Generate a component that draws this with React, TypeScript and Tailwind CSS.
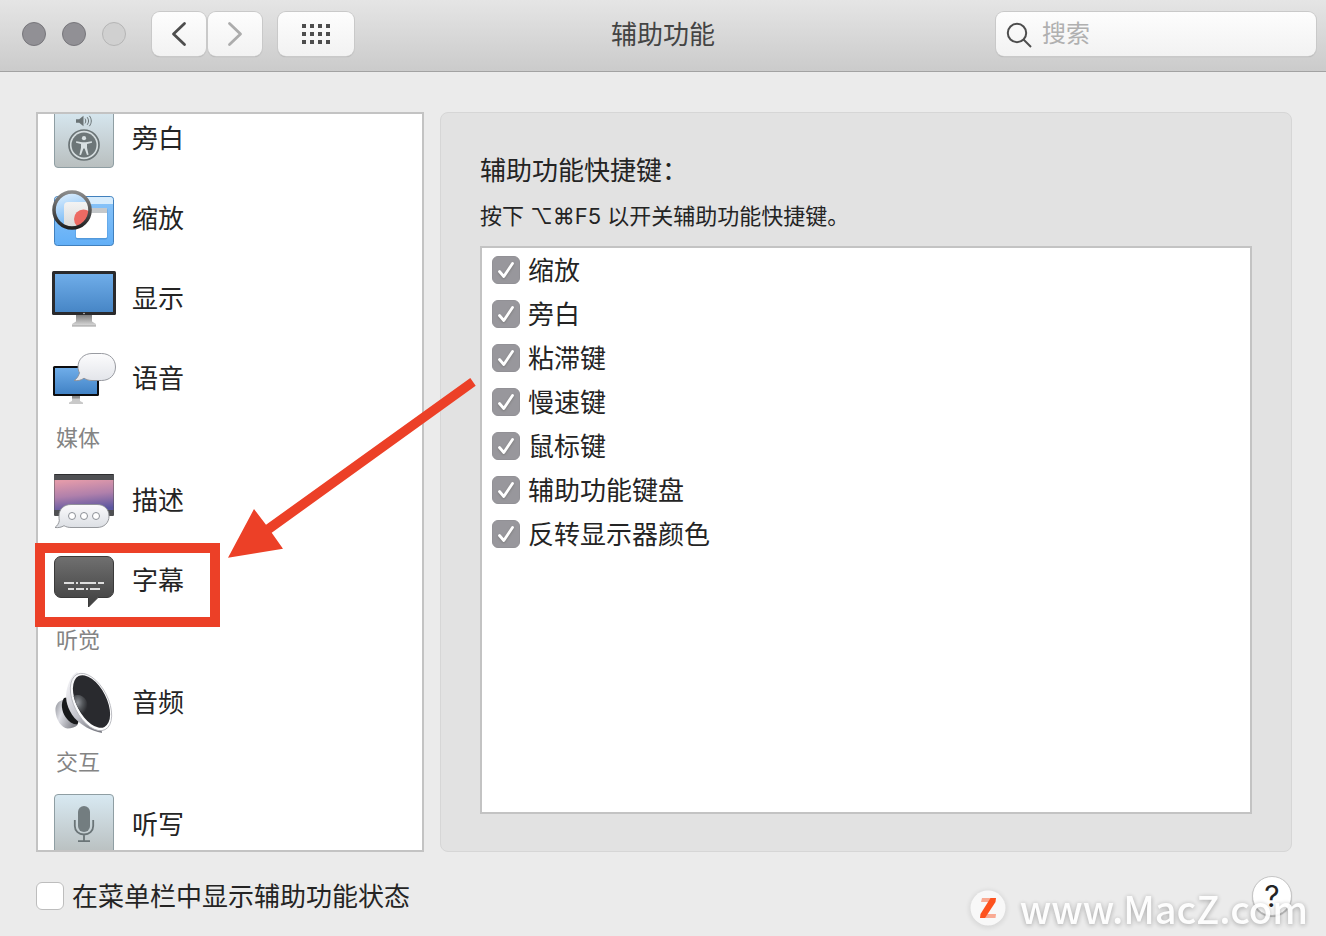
import { type ReactNode, useLayoutEffect, useRef, useState } from "react";

type Entry =
  | { kind: "heading"; label: string }
  | { kind: "item"; label: string; icon: ReactNode };

const SHORTCUTS = ["缩放", "旁白", "粘滞键", "慢速键", "鼠标键", "辅助功能键盘", "反转显示器颜色"];

function IconBox({ children }: { children: ReactNode }) {
  return (
    <svg viewBox="0 0 64 64" className="size-16 shrink-0" fill="none" aria-hidden="true">
      {children}
    </svg>
  );
}

function Tile({ id }: { id: string }) {
  return (
    <>
      <linearGradient id={id} x1="0" y1="0" x2="0" y2="1">
        <stop offset="0" stopColor="#d8e9f2" />
        <stop offset="1" stopColor="#b9bfbf" />
      </linearGradient>
      <rect x="2.5" y="2.5" width="59" height="59" rx="3.5" fill={`url(#${id})`} stroke="#8f9ea3" />
    </>
  );
}

function VoiceOverIcon() {
  return (
    <IconBox>
      <Tile id="voiceover-tile" />
      <path d="M24 13.2h3.2l4.3-3.4v10.4l-4.3-3.4H24z" fill="#6a7375" />
      <path d="M33 12.6c1 1.6 1 3.2 0 4.8M35.2 11.2c1.8 2.5 1.8 5.1 0 7.6M37.4 9.8c2.5 3.5 2.5 6.9 0 10.4" stroke="#6a7375" strokeWidth="1" />
      <circle cx="32" cy="39" r="15" stroke="#6a7375" strokeWidth="1.7" fill="#d5dddf" />
      <circle cx="32" cy="39" r="12.5" fill="#6d7678" />
      <circle cx="32" cy="32.2" r="2.1" fill="#d8e0e2" />
      <path d="M24.2 35.2l6 1h3.6l6-1 .2 1.5-5 1.3v3.7l1.6 7-1.6.4-2.4-6.6h-1.2L29 49.1l-1.6-.4 1.6-7V38l-5-1.3z" fill="#d8e0e2" />
    </IconBox>
  );
}

function ZoomIcon() {
  return (
    <IconBox>
      <defs>
        <linearGradient id="zoom-desk" x1="0" y1="0" x2="0" y2="1">
          <stop offset="0" stopColor="#8cc5f8" />
          <stop offset="1" stopColor="#62aff7" />
        </linearGradient>
        <linearGradient id="zoom-lens" x1="0" y1="0" x2="0.3" y2="1">
          <stop offset="0" stopColor="#e8f4fe" />
          <stop offset="1" stopColor="#6db4f6" />
        </linearGradient>
        <linearGradient id="zoom-rim" x1="0" y1="0" x2="0" y2="1">
          <stop offset="0" stopColor="#8b8b8b" />
          <stop offset="1" stopColor="#202020" />
        </linearGradient>
        <linearGradient id="zoom-page" x1="0" y1="0" x2="0" y2="1">
          <stop offset="0" stopColor="#f3f3f3" />
          <stop offset="1" stopColor="#d5d5d5" />
        </linearGradient>
        <clipPath id="zoom-clip">
          <circle cx="20" cy="24" r="17" />
        </clipPath>
      </defs>
      <rect x="2.5" y="10.5" width="59" height="49" rx="3" fill="url(#zoom-desk)" stroke="#4180bd" />
      <path d="M3 18v-4a3 3 0 0 1 3-3h52a3 3 0 0 1 3 3v4z" fill="#d7ecfc" />
      <rect x="23.5" y="22" width="32" height="31.5" rx="2" fill="#3c7fc0" opacity=".5" />
      <rect x="24" y="22" width="31" height="30" rx="1.5" fill="#fff" />
      <path d="M24 22h30a1 1 0 0 1 1 1v4H24z" fill="#c4c8cb" />
      <circle cx="20" cy="24" r="18" fill="url(#zoom-lens)" />
      <g clipPath="url(#zoom-clip)">
        <rect x="12" y="16" width="30" height="30" rx="4" fill="url(#zoom-page)" />
        <circle cx="31.5" cy="33" r="9.5" fill="#ed6a63" />
      </g>
      <circle cx="20" cy="24" r="18" stroke="url(#zoom-rim)" strokeWidth="3.6" />
    </IconBox>
  );
}

function DisplayIcon() {
  return (
    <IconBox>
      <defs>
        <linearGradient id="display-screen" x1="0" y1="0" x2="0" y2="1">
          <stop offset="0" stopColor="#6fade9" />
          <stop offset="1" stopColor="#4786c6" />
        </linearGradient>
        <linearGradient id="display-stand" x1="0" y1="0" x2="0" y2="1">
          <stop offset="0" stopColor="#7f7f7f" />
          <stop offset="1" stopColor="#dcdcdc" />
        </linearGradient>
      </defs>
      <path d="M24 49h16v6.5l4 2.5v2H20v-2l4-2.5z" fill="url(#display-stand)" />
      <path d="M20 60h24" stroke="#9b9b9b" />
      <rect y="5" width="64" height="44" rx="1.5" fill="#2a2a2c" />
      <rect x="3" y="8" width="58" height="38" fill="url(#display-screen)" />
      <circle cx="32" cy="47.5" r=".8" fill="#ccc" />
    </IconBox>
  );
}

function SpeechIcon() {
  return (
    <IconBox>
      <defs>
        <linearGradient id="speech-screen" x1="0" y1="0" x2="0" y2="1">
          <stop offset="0" stopColor="#6fade9" />
          <stop offset="1" stopColor="#4182c5" />
        </linearGradient>
        <linearGradient id="speech-bubble" x1="0" y1="0" x2="0" y2="1">
          <stop offset="0" stopColor="#fcfcfd" />
          <stop offset="1" stopColor="#e3e5ea" />
        </linearGradient>
      </defs>
      <path d="M20 50h8v5l3 1.5V58H17v-1.5l3-1.5z" fill="#c9c9c9" />
      <path d="M20 50h8v2.5h-8z" fill="#8d8d8d" />
      <rect x="1" y="20" width="46" height="30" rx="1.5" fill="#0c0c0e" />
      <rect x="3" y="22" width="42" height="26" fill="url(#speech-screen)" />
      <path
        d="M40 7.500h9.500c8 0 14 5.500 14 13.500s-6 13.500-14 13.500H40c-3 0-5.500-.8-8-2.300-3 2.100-6 2.800-10 2.300 3-1.800 4.600-4.500 5.500-7.700-1-1.800-1.500-3.800-1.500-5.800 0-8 6-13.500 14-13.500z"
        fill="url(#speech-bubble)"
        stroke="#8d9096"
        strokeWidth=".9"
      />
    </IconBox>
  );
}

function DescriptionsIcon() {
  return (
    <IconBox>
      <defs>
        <linearGradient id="desc-sky" x1="0.35" y1="0" x2="0.55" y2="1">
          <stop offset="0" stopColor="#e29aaa" />
          <stop offset=".5" stopColor="#b080ab" />
          <stop offset="1" stopColor="#5b56a0" />
        </linearGradient>
        <linearGradient id="desc-bubble" x1="0" y1="0" x2="0" y2="1">
          <stop offset="0" stopColor="#fbfbfc" />
          <stop offset="1" stopColor="#dcdfe4" />
        </linearGradient>
      </defs>
      <rect x="2" y="6" width="60" height="42" rx="1" fill="#4f5053" />
      <path d="M2.5 6.5h59" stroke="#2e2e30" />
      <rect x="2.5" y="12" width="59" height="30" fill="url(#desc-sky)" />
      <path
        d="M19 36.5h26c7 0 12 4.500 12 11.500s-5 11.500-12 11.500H19c-2.500 0-5-.6-7-1.800-2.500 1.600-5.500 2.200-9 1.800 2.300-1.800 3.800-4 4.300-6.800-.3-1.500-.3-3-.3-4.700 0-7 5-11.500 12-11.500z"
        fill="url(#desc-bubble)"
        stroke="#8b8d92"
        strokeWidth=".9"
      />
      <g fill="#fff" stroke="#8c9096" strokeWidth="1">
        <circle cx="20" cy="48" r="3.5" />
        <circle cx="32" cy="48" r="3.5" />
        <circle cx="44" cy="48" r="3.5" />
      </g>
    </IconBox>
  );
}

function CaptionsIcon() {
  return (
    <IconBox>
      <linearGradient id="captions-bubble" x1="0" y1="0" x2="0" y2="1">
        <stop offset="0" stopColor="#707070" />
        <stop offset="1" stopColor="#3f3f3f" />
      </linearGradient>
      <path
        d="M9 8.5h46a6.500 6.500 0 0 1 6.500 6.500v28a6.500 6.500 0 0 1-6.500 6.500h-9L36.500 59v-9.500H9A6.500 6.500 0 0 1 2.500 43V15A6.500 6.500 0 0 1 9 8.500z"
        fill="url(#captions-bubble)"
        stroke="#3a3a3a"
      />
      <path d="M12 35h10M24 35h2M28 35h16M46 35h6M16 41h6M24 41h8M34 41h2M38 41h10" stroke="#dedede" strokeWidth="2" />
    </IconBox>
  );
}

function AudioIcon() {
  return (
    <IconBox>
      <defs>
        <linearGradient id="audio-cap" x1="0" y1="0" x2="1" y2="0.5">
          <stop offset="0" stopColor="#8e9097" />
          <stop offset=".4" stopColor="#dfe0e6" />
          <stop offset="1" stopColor="#85868d" />
        </linearGradient>
        <linearGradient id="audio-horn" x1="0" y1="0.3" x2="0.7" y2="1">
          <stop offset="0" stopColor="#ececf0" />
          <stop offset=".55" stopColor="#bfc0c8" />
          <stop offset="1" stopColor="#7b7c84" />
        </linearGradient>
        <linearGradient id="audio-rim" x1="0" y1="0" x2="0.4" y2="1">
          <stop offset="0" stopColor="#f6f6f8" />
          <stop offset="1" stopColor="#ffffff" />
        </linearGradient>
        <radialGradient id="audio-dome" cx="0.3" cy="0.4" r="0.7">
          <stop offset="0" stopColor="#8e9196" />
          <stop offset=".5" stopColor="#55585c" />
          <stop offset="1" stopColor="#2b2c30" />
        </radialGradient>
      </defs>
      <path d="M11 30C6 31 3 35 3.500 41c.5 9 6 17 12 17.500 4 0 8-1.500 10-3.500z" fill="url(#audio-cap)" />
      <path d="M12 28c-3.500 5-2.500 13 1.500 19 3 4.500 7 7.500 12 7.500l2-6-8-22z" fill="#17181a" />
      <path d="M25 2c-6 3-9 12-10.500 19-1.500 9 1 18 8 27C29 55 39 61 50 63l-4-30z" fill="url(#audio-horn)" />
      <ellipse cx="39" cy="32" rx="17" ry="31" transform="rotate(-27 39 32)" fill="url(#audio-rim)" stroke="#b4b5bb" strokeWidth=".8" />
      <ellipse cx="39.500" cy="31.500" rx="15" ry="28.500" transform="rotate(-27 39.500 31.500)" fill="#292a2e" />
      <path d="M21.500 26c5-2.500 10 0 12.500 4 3 5 2 11-3 14-5-5-8-11-9.500-18z" fill="url(#audio-dome)" />
    </IconBox>
  );
}

function DictationIcon() {
  return (
    <IconBox>
      <Tile id="dictation-tile" />
      <rect x="26" y="14" width="12" height="26" rx="6" fill="#737d80" />
      <path d="M22.8 28v6c0 5 4 8.500 9.200 8.500s9.200-3.500 9.200-8.500v-6M32 43v6M26 49.200h12" stroke="#6a7477" strokeWidth="1.8" />
    </IconBox>
  );
}

const ENTRIES: Entry[] = [
  { kind: "item", label: "旁白", icon: <VoiceOverIcon /> },
  { kind: "item", label: "缩放", icon: <ZoomIcon /> },
  { kind: "item", label: "显示", icon: <DisplayIcon /> },
  { kind: "item", label: "语音", icon: <SpeechIcon /> },
  { kind: "heading", label: "媒体" },
  { kind: "item", label: "描述", icon: <DescriptionsIcon /> },
  { kind: "item", label: "字幕", icon: <CaptionsIcon /> },
  { kind: "heading", label: "听觉" },
  { kind: "item", label: "音频", icon: <AudioIcon /> },
  { kind: "heading", label: "交互" },
  { kind: "item", label: "听写", icon: <DictationIcon /> },
];

function Toolbar() {
  const button =
    "flex h-11 items-center justify-center rounded-lg bg-linear-to-b from-[#fdfdfd] to-[#f2f2f2] shadow-[0_0_0_1px_#c9c9c9,0_1px_1px_#a0a0a0]";
  return (
    <header className="grid h-[72px] shrink-0 grid-cols-[1fr_auto_1fr] items-center border-b border-[#a2a2a2] bg-linear-to-b from-[#e5e5e5] to-[#cbcbcb] px-[10px] pb-[3px]">
      <div className="flex items-center pl-3">
        <div className="flex gap-4">
          <button type="button" aria-label="关闭" className="size-6 rounded-full border border-[#77767b] bg-[#919095]" />
          <button type="button" aria-label="最小化" className="size-6 rounded-full border border-[#77767b] bg-[#919095]" />
          <button type="button" aria-label="缩放窗口" disabled className="size-6 rounded-full border border-[#b5b5b5] bg-[#d0d0d0]" />
        </div>
        <div className="ml-[26px] flex gap-[2px]">
          <button type="button" aria-label="后退" className={`${button} w-[54px]`}>
            <svg viewBox="0 0 54 44" className="h-11 w-[54px]" fill="none" stroke="#4d4d4d" strokeWidth="2.8" strokeLinecap="round" strokeLinejoin="round">
              <path d="M32.5 11.5 21.5 22l11 10.5" />
            </svg>
          </button>
          <button type="button" aria-label="前进" className={`${button} w-[54px]`}>
            <svg viewBox="0 0 54 44" className="h-11 w-[54px]" fill="none" stroke="#acacac" strokeWidth="2.8" strokeLinecap="round" strokeLinejoin="round">
              <path d="M21.5 11.5 32.5 22l-11 10.5" />
            </svg>
          </button>
        </div>
        <button type="button" aria-label="显示全部" className={`${button} ml-4 w-[76px]`}>
          <svg viewBox="0 0 28 20" className="h-5 w-7" fill="#4d4d4d">
            {[0, 8, 16, 24].map((x) => [0, 8, 16].map((y) => <rect key={`${x}-${y}`} x={x} y={y} width="4" height="4" />))}
          </svg>
        </button>
      </div>
      <h1 className="pt-[2px] text-[26px] leading-9 text-[#444444]">辅助功能</h1>
      <label className={`${button} w-80 justify-self-end pr-3 pl-[10px]`}>
        <svg viewBox="0 0 28 28" className="size-7 shrink-0" fill="none" stroke="#4d4d4d" strokeWidth="2">
          <circle cx="11" cy="13" r="9.2" />
          <path d="m17.500 19.500 7.500 7.500" />
        </svg>
        <input
          type="search"
          aria-label="搜索"
          placeholder="搜索"
          className="ml-2 w-full min-w-0 bg-transparent text-2xl leading-8 text-[#262626] outline-none placeholder:text-[#b0b0b0]"
        />
      </label>
    </header>
  );
}

function Sidebar() {
  const listRef = useRef<HTMLUListElement>(null);

  // open slightly scrolled, so the first row sits half under the top edge
  useLayoutEffect(() => {
    if (listRef.current) listRef.current.scrollTop = 16;
  }, []);

  return (
    <ul ref={listRef} className="w-[388px] shrink-0 overflow-y-auto border-2 border-[#c3c3c3] bg-white [scrollbar-width:none]">
      {ENTRIES.map((entry) =>
        entry.kind === "heading" ? (
          <li key={entry.label} className="flex h-[42px] items-center pb-[2px] pl-[18px] text-[22px] leading-8 text-[#848484]">
            {entry.label}
          </li>
        ) : (
          <li key={entry.label}>
            <button type="button" className="flex h-20 w-full items-center gap-4 pl-[14px] text-[26px] leading-9">
              {entry.icon}
              <span className="pt-[2px]">{entry.label}</span>
            </button>
          </li>
        ),
      )}
    </ul>
  );
}

function ShortcutRow({ label }: { label: string }) {
  const [checked, setChecked] = useState(true);
  return (
    <li>
      <label className="flex h-11 items-center gap-2 pl-[10px] text-[26px] leading-9">
        <span className="relative size-7 shrink-0">
          <input
            type="checkbox"
            checked={checked}
            onChange={(e) => setChecked(e.target.checked)}
            className="block size-7 appearance-none rounded-md border border-[#bdbdbd] bg-white checked:border-[#929196] checked:bg-[#98979c]"
          />
          {checked && (
            <svg viewBox="0 0 28 28" className="pointer-events-none absolute inset-0 size-7 drop-shadow-[0_1px_1px_#7a7a7a]" fill="none" stroke="#fff" strokeWidth="2.8" strokeLinecap="round" strokeLinejoin="round">
              <path d="M7.5 15.5 11.8 20.500 20.500 7.500" />
            </svg>
          )}
        </span>
        <span className="pt-[2px]">{label}</span>
      </label>
    </li>
  );
}

function Callout() {
  return (
    <svg viewBox="0 0 480 640" className="pointer-events-none absolute top-0 left-0 h-[640px] w-[480px]" fill="none" aria-hidden="true">
      <rect x="40" y="548" width="175" height="74" stroke="#ec4027" strokeWidth="10" />
      <path d="M470.3 378 475.7 385.7 271.7 532.7 283 548.7 228 557.7 254 509 266 524.7z" fill="#ec4027" />
    </svg>
  );
}

function Watermark() {
  return (
    <div className="pointer-events-none absolute right-[18px] bottom-[2px] flex items-center gap-[14px] opacity-90">
      <svg viewBox="0 0 36 36" className="size-9 drop-shadow-[0_1px_3px_#00000026]" aria-hidden="true">
        <circle cx="18" cy="18" r="17.5" fill="#fafafa" />
        <path d="M12 8h14l-3 4H11z" fill="#fba48a" />
        <path d="M13 24h13l-.5 4H10z" fill="#fba48a" />
        <path d="M20.5 8H26l-.5 4L15 28h-5l.5-4z" fill="#ff4208" />
      </svg>
      <span className="font-['Noto_Sans_CJK_SC',sans-serif] text-[38px] leading-[52px] font-medium text-white [text-shadow:0_1px_5px_#00000059]">
        www.MacZ.com
      </span>
    </div>
  );
}

export default function App() {
  return (
    <div className="relative flex h-screen min-h-[600px] flex-col overflow-hidden bg-[#ebebeb] font-['Inter','Noto_Sans_CJK_SC',sans-serif] text-[#242424]">
      <Toolbar />
      <main className="flex min-h-0 flex-1 gap-4 pt-10 pr-[34px] pl-9">
        <Sidebar />
        <section className="flex min-w-0 flex-1 flex-col rounded-lg border border-[#d6d6d6] bg-[#e2e2e2] px-[39px] pt-10 pb-[37px]">
          <h2 className="text-[26px] leading-9">辅助功能快捷键：</h2>
          <p className="mt-3 text-[22px] leading-[30px]">按下 ⌥⌘F5 以开关辅助功能快捷键。</p>
          <ul className="mt-[15px] min-h-0 flex-1 overflow-y-auto border-2 border-[#c3c3c3] bg-white">
            {SHORTCUTS.map((label) => (
              <ShortcutRow key={label} label={label} />
            ))}
          </ul>
        </section>
      </main>
      <footer className="flex shrink-0 items-center justify-between pt-6 pr-[34px] pb-5 pl-9">
        <label className="flex items-center gap-2 text-[26px] leading-9">
          <input
            type="checkbox"
            className="size-7 appearance-none rounded-md border border-[#bdbdbd] bg-white checked:bg-[#98979c]"
          />
          <span className="pt-[2px]">在菜单栏中显示辅助功能状态</span>
        </label>
        <button type="button" aria-label="帮助" className="size-10 rounded-full border border-[#c6c6c6] bg-white text-[30px] leading-9 shadow-[0_1px_1px_#b0b0b0]">
          ?
        </button>
      </footer>
      <Callout />
      <Watermark />
    </div>
  );
}
